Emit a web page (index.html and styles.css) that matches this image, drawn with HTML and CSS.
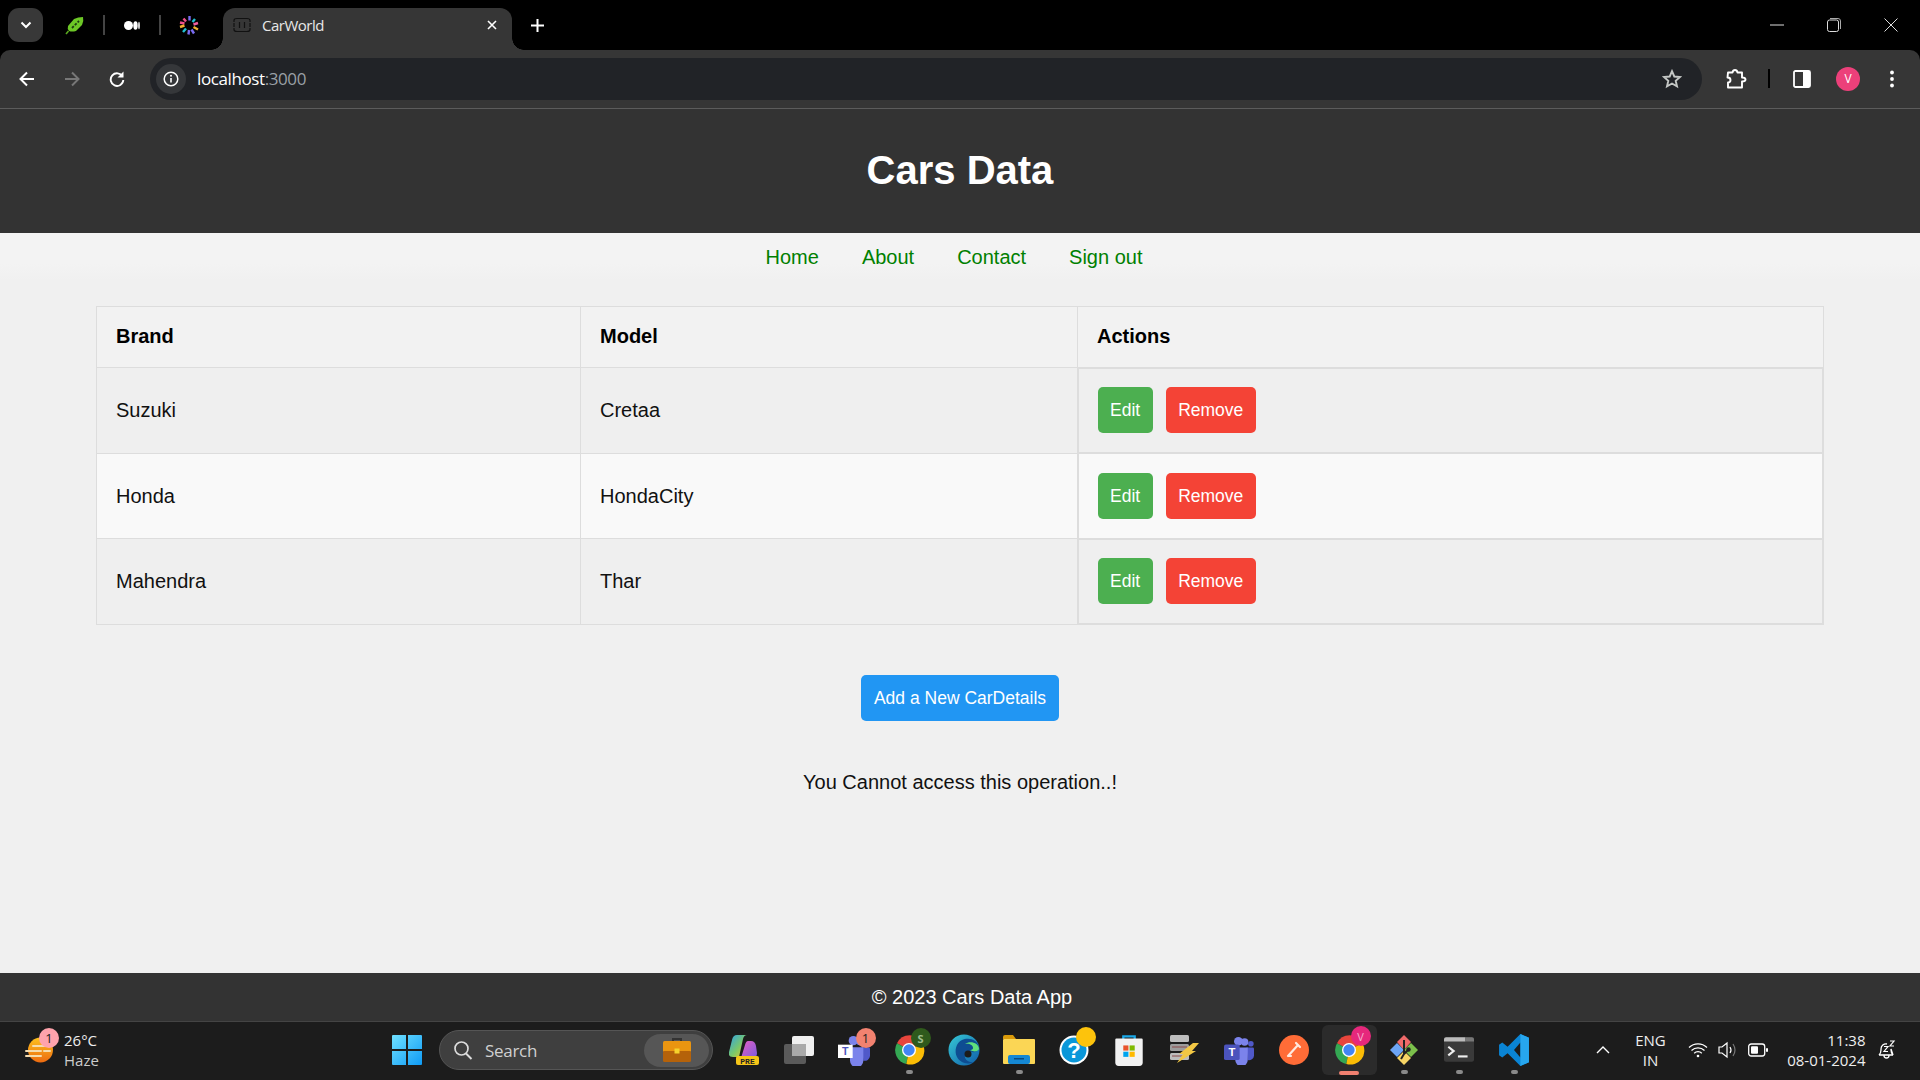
FILE: index.html
```html
<!DOCTYPE html>
<html lang="en">
<head>
<meta charset="utf-8">
<title>CarWorld</title>
<link rel="stylesheet" href="styles.css">
</head>
<body>
<svg class="defs" width="0" height="0" aria-hidden="true">
  <symbol id="chrome" viewBox="0 0 48 48">
    <path d="M24 24 L6 14 A21 21 0 0 1 44 14 Z" fill="#e8453c"/>
    <path d="M24 24 L6 14 A21 21 0 0 0 20 45 Z" fill="#34a853"/>
    <path d="M24 24 L44 14 A21 21 0 0 1 20 45 Z" fill="#fbbc05"/>
    <circle cx="24" cy="24" r="10.500" fill="#fff"/>
    <circle cx="24" cy="24" r="8.500" fill="#4285f4"/>
  </symbol>
  <symbol id="teams" viewBox="0 0 48 48">
    <circle cx="33" cy="11" r="6" fill="#7b83eb"/>
    <circle cx="43" cy="14" r="4.500" fill="#5059c9"/>
    <path d="M36 20h10a2 2 0 0 1 2 2v11a8 8 0 0 1-10 7z" fill="#5059c9"/>
    <path d="M18 20h20v20a10 10 0 0 1-20 0z" fill="#7b83eb"/>
    <circle cx="23" cy="10" r="7" fill="#7b83eb"/>
  </symbol>
</svg>

<div class="tabstrip">
  <button class="tabsearch"><svg width="12" height="8" viewBox="0 0 12 8"><path d="M1.500 1.500 6 6l4.500-4.500" fill="none" stroke="#fff" stroke-width="2"/></svg></button>
  <div class="pin leaf"><svg width="20" height="20" viewBox="0 0 20 20"><path d="M3 11 9 4q4-2 9-2 1 4-1 8l-6 6q-4 1-7 0-2-2-1-5z" fill="#6cc726"/><path d="M1 19 3.500 16" stroke="#5aa820" stroke-width="1.600"/><path d="M7 13l7-7" stroke="#1c3a10" stroke-width="1.800" stroke-dasharray="2.500 1.500"/></svg></div>
  <span class="pinsep"></span>
  <div class="pin medium"><svg width="16" height="9" viewBox="0 0 16 9"><ellipse cx="4.500" cy="4.500" rx="4.500" ry="4.500" fill="#fff"/><ellipse cx="11.500" cy="4.500" rx="2.200" ry="4.200" fill="#fff"/><ellipse cx="15" cy="4.500" rx="1" ry="3.800" fill="#ccc"/></svg></div>
  <span class="pinsep"></span>
  <div class="pin spark"><svg width="20" height="20" viewBox="0 0 20 20" stroke-width="2.400"><path d="M10.500 1v4.500" stroke="#7a6cf0"/><path d="M4.500 3.500 7 6.500" stroke="#f0508a"/><path d="M16 4 13.500 7" stroke="#20c0d0"/><path d="M1 7.500 5.500 8.500" stroke="#f0508a"/><path d="M19 8 14.500 9.500" stroke="#f05fa0"/><path d="M1 12l4.500-1.500" stroke="#f0b030"/><path d="M19 14.500 14.500 12" stroke="#f0b030"/><path d="M4 17 7 13.500" stroke="#20c0d0"/><path d="M9.500 19.500 10 15" stroke="#7a6cf0"/><path d="M15 18.500 12.500 14.500" stroke="#7a6cf0"/></svg></div>
  <div class="tab">
    <svg class="favicon" width="18" height="16" viewBox="0 0 18 16"><path d="M1 5V3.500Q1 1.500 4 1.500h10q3 0 3 2V5M1 11v1.500q0 2 3 2h10q3 0 3-2V11M1 6v4M17 6v4M6.500 5v6M11.500 5v6" fill="none" stroke="#111" stroke-width="1.200"/></svg>
    <span class="tabtitle">CarWorld</span>
    <svg class="tabclose" width="10" height="10" viewBox="0 0 10 10"><path d="M1 1l8 8M9 1 1 9" stroke="#fff" stroke-width="1.600"/></svg>
  </div>
  <svg class="newtab" width="13" height="13" viewBox="0 0 13 13"><path d="M6.500 0v13M0 6.500h13" stroke="#fff" stroke-width="2"/></svg>
  <div class="winctl">
    <svg width="14" height="2" viewBox="0 0 14 2"><path d="M0 1h14" stroke="#ddd"/></svg>
    <svg width="14" height="14" viewBox="0 0 14 14"><rect x=".5" y="2" width="11" height="11.500" rx="2" fill="none" stroke="#ddd"/><path d="M3 .5h8q2.500 0 2.500 2.500v8" fill="none" stroke="#aaa"/></svg>
    <svg width="14" height="14" viewBox="0 0 14 14"><path d="M.5.5l13 13M13.500.5l-13 13" stroke="#ddd"/></svg>
  </div>
</div>

<div class="toolbarwrap">
<div class="toolbar">
  <svg class="navicon" width="16" height="16" viewBox="0 0 16 16"><path d="M15 8H2M8 1.500 1.500 8 8 14.500" fill="none" stroke="#fff" stroke-width="2"/></svg>
  <svg class="navicon" width="16" height="16" viewBox="0 0 16 16"><path d="M1 8h13M8 1.500 14.500 8 8 14.500" fill="none" stroke="#777" stroke-width="2"/></svg>
  <svg class="navicon" width="16" height="16" viewBox="0 0 16 16"><path d="M13.500 5.500A6.300 6.300 0 1 0 14.300 9" fill="none" stroke="#fff" stroke-width="1.900"/><path d="M14.500 .5v6h-6z" fill="#fff"/></svg>
  <div class="omnibox">
    <span class="siteinfo"><svg width="16" height="16" viewBox="0 0 16 16"><circle cx="8" cy="8" r="6.800" fill="none" stroke="#fff" stroke-width="1.500"/><path d="M8 7v4.500" stroke="#fff" stroke-width="1.600"/><circle cx="8" cy="4.800" r="1" fill="#fff"/></svg></span>
    <span class="url">localhost<span class="urlport">:3000</span></span>
    <svg class="star" width="20" height="20" viewBox="0 0 20 20"><path d="M10 2.200 12.300 7.500l5.700.5-4.300 3.800 1.300 5.600L10 14.500l-5 2.900 1.300-5.600L2 8l5.700-.5z" fill="none" stroke="#c4c7c5" stroke-width="1.900"/></svg>
  </div>
  <svg class="tbicon ext" width="21" height="20" viewBox="0 0 21 20"><path d="M2 3.500h4.500Q7 1 9 1t2.500 2.500H16v5q3.500 0 3.500 2T16 12.500v6H2v-5q2.500 0 2.500-2.500T1.500 8.500z" fill="none" stroke="#fff" stroke-width="1.900" stroke-linejoin="round"/></svg>
  <span class="tbsep"></span>
  <svg class="tbicon panel" width="18" height="18" viewBox="0 0 18 18"><rect x="1" y="1" width="16" height="16" rx="1.500" fill="none" stroke="#fff" stroke-width="1.800"/><rect x="10" y="1" width="7" height="16" fill="#fff"/></svg>
  <span class="avatar">V</span>
  <svg class="tbicon dots" width="6" height="18" viewBox="0 0 6 18"><circle cx="3" cy="2.500" r="1.900" fill="#fff"/><circle cx="3" cy="9" r="1.900" fill="#fff"/><circle cx="3" cy="15.500" r="1.900" fill="#fff"/></svg>
</div>
</div>

<div class="page">
  <header class="hero"><h1>Cars Data</h1></header>
  <nav class="links">
    <a href="#">Home</a>
    <a href="#">About</a>
    <a href="#">Contact</a>
    <a href="#">Sign out</a>
  </nav>
  <main class="content">
    <table class="cars">
      <colgroup><col class="c1"><col class="c2"><col></colgroup>
      <thead>
        <tr><th>Brand</th><th>Model</th><th>Actions</th></tr>
      </thead>
      <tbody>
        <tr><td>Suzuki</td><td>Cretaa</td><td class="act"><button class="btn edit">Edit</button><button class="btn remove">Remove</button></td></tr>
        <tr><td>Honda</td><td>HondaCity</td><td class="act"><button class="btn edit">Edit</button><button class="btn remove">Remove</button></td></tr>
        <tr><td>Mahendra</td><td>Thar</td><td class="act"><button class="btn edit">Edit</button><button class="btn remove">Remove</button></td></tr>
      </tbody>
    </table>
    <button class="btn add">Add a New CarDetails</button>
    <p class="msg">You Cannot access this operation..!</p>
  </main>
  <footer class="foot">© 2023 Cars Data App</footer>
</div>

<div class="taskbar">
  <div class="weather">
    <span class="wicon"><svg width="28" height="26" viewBox="0 0 28 26"><defs><linearGradient id="sun" x1="0" y1="0" x2="0" y2="1"><stop offset="0" stop-color="#fdc21e"/><stop offset="1" stop-color="#ec6a10"/></linearGradient></defs><circle cx="15.500" cy="13" r="12.500" fill="url(#sun)"/><path d="M8 9h16M1 14h15M19 14h6M1 19h15" stroke="#f5dcae" stroke-width="2" stroke-linecap="round"/></svg><span class="wbadge">1</span></span>
    <span class="wtext"><span>26°C</span><span class="haze">Haze</span></span>
  </div>
  <span class="startbtn"><svg width="30" height="30" viewBox="0 0 30 30"><defs><linearGradient id="win" x1="0" y1="0" x2="1" y2="1"><stop offset="0" stop-color="#6fe0ff"/><stop offset="1" stop-color="#0f9bf5"/></linearGradient></defs><path d="M0 1q0-1 1-1h13v14H0zM16 0h13q1 0 1 1v13H16zM0 16h14v14H1q-1 0-1-1zM16 16h14v13q0 1-1 1H16z" fill="url(#win)"/></svg></span>
  <div class="search">
    <svg width="20" height="20" viewBox="0 0 20 20"><circle cx="8.500" cy="8.500" r="6.500" fill="none" stroke="#ddd" stroke-width="1.700"/><path d="M13 13.500 18.500 19" stroke="#ddd" stroke-width="1.900"/></svg>
    <span class="searchtext">Search</span>
    <span class="bag"><svg width="28" height="24" viewBox="0 0 28 24"><path d="M10 4V1h8v3" fill="none" stroke="#333" stroke-width="2"/><rect y="3" width="28" height="11" rx="1.500" fill="#ea9510"/><rect y="13" width="28" height="11" rx="1.500" fill="#b5620a"/><rect x="11.500" y="10.500" width="5" height="5" fill="#f6d32d"/></svg></span>
  </div>
  <div class="apps">
    <span class="app"><svg width="30" height="30" viewBox="0 0 30 30"><defs><linearGradient id="cp" x1="0" y1="0" x2="1" y2="1"><stop offset="0" stop-color="#2fa4e7"/><stop offset=".55" stop-color="#7ac86a"/><stop offset="1" stop-color="#f5c323"/></linearGradient><linearGradient id="cp2" x1="0" y1="0" x2="1" y2="1"><stop offset="0" stop-color="#e85fc0"/><stop offset="1" stop-color="#7a5ae0"/></linearGradient></defs><path d="M8 0h10q-3 0-4 4L10 22H4Q-1 22 0 17L3 5q1-5 5-5z" fill="url(#cp)"/><path d="M19 6h3q4 0 5 5l1 7q0 5-4 5h-12l4-13q1-4 3-4z" fill="url(#cp2)"/><rect x="7" y="21" width="23" height="9" rx="2" fill="#f5c518"/><text x="18.500" y="28.500" class="pretext">PRE</text></svg></span>
    <span class="app"><svg width="30" height="28" viewBox="0 0 30 28"><rect y="8" width="22" height="20" rx="2" fill="#5a5a5a"/><rect x="8" y="0" width="22" height="20" rx="2" fill="#f0f0f0"/><rect x="8" y="8" width="14" height="12" fill="#aaa"/></svg></span>
    <span class="app"><svg width="32" height="32" viewBox="0 0 48 48"><use href="#teams"/><rect x="0" y="16" width="22" height="20" fill="#fff"/><text x="11" y="32" class="tletter">T</text></svg><span class="badge red">1</span></span>
    <span class="app"><svg width="32" height="32" viewBox="0 0 48 48"><use href="#chrome"/></svg><span class="badge green">S</span><i class="dot"></i></span>
    <span class="app"><svg width="32" height="32" viewBox="0 0 32 32"><defs><linearGradient id="ed" x1="0" y1="0" x2="1" y2="1"><stop offset="0" stop-color="#36c9d6"/><stop offset="1" stop-color="#0f5ca8"/></linearGradient></defs><circle cx="16" cy="16" r="15.500" fill="url(#ed)"/><path d="M31 14C30 5 20 3 14 6 8 9 6 17 9 23c3 6 11 8 17 5-6 1-10-3-9-7 1-3 5-4 7-3 3 1 6-1 7-4z" fill="#0e4d92"/><path d="M31 15c0-6-9-9-14-5 4-1 8 1 8 4 0 2-3 2-3 2 3 2 8 2 9-1z" fill="#5fe07c"/><circle cx="20" cy="20" r="3.500" fill="#1c1c1c"/></svg></span>
    <span class="app"><svg width="32" height="30" viewBox="0 0 32 30"><path d="M0 2q0-2 2-2h8l3 4h-13z" fill="#d99a0a"/><rect y="4" width="32" height="25" rx="1" fill="#fbd655"/><rect x="5" y="20" width="22" height="9" rx="2" fill="#1588d4"/><rect x="11" y="23" width="10" height="1.500" fill="#0a4a80"/></svg><i class="dot"></i></span>
    <span class="app"><svg width="30" height="36" viewBox="0 0 30 36"><circle cx="15" cy="18" r="14.500" fill="#fff"/><circle cx="15" cy="18" r="12.500" fill="#0a97d9"/><text x="15" y="26" class="qmark">?</text></svg><span class="badge yellow"></span></span>
    <span class="app"><svg width="28" height="32" viewBox="0 0 24 28"><path d="M7 5V2h10v3" fill="none" stroke="#1aa8e8" stroke-width="2"/><path d="M1 4h22q1 0 1 1v20q0 3-3 3H3q-3 0-3-3V5q0-1 1-1z" fill="#f2f2f2"/><rect x="7" y="10" width="4.500" height="4.500" fill="#e8532b"/><rect x="12.500" y="10" width="4.500" height="4.500" fill="#7fba00"/><rect x="7" y="15.500" width="4.500" height="4.500" fill="#00a4ef"/><rect x="12.500" y="15.500" width="4.500" height="4.500" fill="#ffb900"/></svg></span>
    <span class="app"><svg width="30" height="30" viewBox="0 0 30 30"><rect x="1" y="0" width="19" height="7" rx="1.500" fill="#bdbdbd"/><rect x="1" y="9" width="19" height="7" rx="1.500" fill="#9c9c9c"/><rect x="1" y="18" width="19" height="7" rx="1.500" fill="#bdbdbd"/><path d="M3 12h15M3 21h15" stroke="#8a4a4a"/><path d="M24 8h6l-7 8h4L8 28l6-9H10z" fill="#f2c744"/></svg></span>
    <span class="app"><svg width="30" height="30" viewBox="0 0 48 48"><use href="#teams"/><rect x="0" y="15" width="25" height="25" rx="3" fill="#4b53bc"/><text x="12.500" y="34" class="tletter2">T</text></svg></span>
    <span class="app"><svg width="30" height="30" viewBox="0 0 30 30"><circle cx="15" cy="15" r="15" fill="#ff6c37"/><path d="M9 21 19 10M17 8l4 4M9 21l3 0" stroke="#ffe9df" stroke-width="2.200" stroke-linecap="round"/></svg></span>
    <span class="app active"><svg width="32" height="32" viewBox="0 0 48 48"><use href="#chrome"/></svg><span class="badge pink">V</span><i class="bar"></i></span>
    <span class="app"><svg width="30" height="30" viewBox="0 0 30 30"><path d="M8 8l7 7-7 7-7-7z" fill="#6da5f5"/><path d="M15 0l7 7-7 8-7-8z" fill="#f06a6a"/><path d="M22 8l7 7-7 7-7-7z" fill="#7cc04b"/><path d="M15 16l7 7-7 7-7-7z" fill="#f7d565"/><path d="M15 5v14M15 19l-3 5M15 19l4-4" stroke="#222" stroke-width="2"/><circle cx="19.500" cy="14.500" r="2.200" fill="#222"/></svg><i class="dot"></i></span>
    <span class="app"><svg width="30" height="26" viewBox="0 0 28 24"><rect width="28" height="23" rx="2" fill="#3a3a3a"/><path d="M2 0h18v4H0V2q0-2 2-2z" fill="#bbb"/><path d="M20 0h6q2 0 2 2v2h-8z" fill="#777"/><path d="M4 9l5 4-5 4" fill="none" stroke="#eee" stroke-width="2"/><path d="M13 18h9" stroke="#eee" stroke-width="2"/></svg><i class="dot"></i></span>
    <span class="app"><svg width="30" height="32" viewBox="0 0 28 30"><path d="M20 0 28 3.500v23L20 30 8 18l-5 4-3-2v-10l3-2 5 4zM20 8l-6 7 6 7z" fill="#0a84d4"/><path d="M20 0 28 3.500v23L20 30z" fill="#27a6ee"/></svg><i class="dot"></i></span>
  </div>
  <div class="tray">
    <svg class="tchev" width="14" height="8" viewBox="0 0 14 8"><path d="M1 7l6-6 6 6" fill="none" stroke="#fff" stroke-width="1.400"/></svg>
    <span class="lang"><span>ENG</span><span>IN</span></span>
    <svg class="wifi" width="20" height="16" viewBox="0 0 20 16"><path d="M1 5.500a13 13 0 0 1 18 0M3.500 8.500a9.500 9.500 0 0 1 13 0M6.200 11.200a5.500 5.500 0 0 1 7.600 0" fill="none" stroke="#fff" stroke-width="1.300"/><circle cx="10" cy="14" r="1.300" fill="#fff"/></svg>
    <svg class="vol" width="20" height="18" viewBox="0 0 20 18"><path d="M1 6h3l5-4v14l-5-4H1z" fill="none" stroke="#fff" stroke-width="1.200"/><path d="M12 6q2 3 0 6" fill="none" stroke="#fff" stroke-width="1.200"/><path d="M15 3q4 6 0 12" fill="none" stroke="#777" stroke-width="1.200"/></svg>
    <svg class="batt" width="20" height="14" viewBox="0 0 20 14"><rect x=".7" y="1" width="16" height="12" rx="2.500" fill="none" stroke="#fff" stroke-width="1.300"/><rect x="3" y="3.300" width="7" height="7.400" rx="1" fill="#fff"/><rect x="18" y="5" width="2" height="4" rx="1" fill="#fff"/></svg>
    <span class="clock"><span>11:38</span><span>08-01-2024</span></span>
    <svg class="bell" width="18" height="20" viewBox="0 0 18 20"><path d="M1 15q2-2 2-5V9a5 5 0 0 1 6-5v0M13 9v1q0 3 2 5zM1 15h14M6 15.500a2.500 2.500 0 0 0 5 0" fill="none" stroke="#fff" stroke-width="1.300"/><path d="M6 6.500h4l-4 5h4M12 1h4l-4 5h4" fill="none" stroke="#fff" stroke-width="1.200"/></svg>
  </div>
</div>
</body>
</html>
```
FILE: styles.css
```css
* { box-sizing: border-box; }
html, body { margin: 0; padding: 0; }
body {
  width: 1920px;
  height: 1080px;
  overflow: hidden;
  display: flex;
  flex-direction: column;
  font-family: "Liberation Sans", Arial, sans-serif;
  background: #f0f0f0;
}
.defs { position: absolute; }

/* tab strip */
.tabstrip {
  height: 50px;
  flex: none;
  background: #000;
  display: flex;
  align-items: center;
  position: relative;
}
.tabsearch {
  width: 35px;
  height: 34px;
  margin: 0 0 0 8px;
  border: 0;
  padding: 0;
  border-radius: 11px;
  background: #383838;
  display: flex;
  align-items: center;
  justify-content: center;
}
.pin { display: flex; align-items: center; justify-content: center; height: 20px; }
.leaf { width: 20px; margin-left: 22px; }
.medium { width: 16px; }
.spark { width: 20px; }
.pinsep { width: 2px; height: 20px; background: #444; }
.leaf + .pinsep { margin: 0 19px 0 18px; }
.medium + .pinsep { margin: 0 18px 0 19px; }
.tab {
  width: 289px;
  height: 42px;
  margin: 8px 0 0 24px;
  border-radius: 12px 12px 0 0;
  background: #363636;
  display: flex;
  align-items: center;
  padding: 0 15px 8px 10px;
  position: relative;
}
.tab::before, .tab::after {
  content: "";
  position: absolute;
  bottom: 0;
  width: 12px;
  height: 12px;
}
.tab::before { left: -12px; background: radial-gradient(circle at 0 0, transparent 11.500px, #363636 12px); }
.tab::after { right: -12px; background: radial-gradient(circle at 100% 0, transparent 11.500px, #363636 12px); }
.favicon { flex: none; }
.tabtitle {
  margin-left: 11px;
  font: 15px "Open Sans", "Noto Sans", sans-serif;
  letter-spacing: -.5px;
  color: #e8e8e8;
  flex: 1;
}
.tabclose { flex: none; }
.newtab { margin: 0 0 0 19px; }
.winctl {
  margin-left: auto;
  width: 128px;
  margin-right: 22px;
  display: flex;
  align-items: center;
  justify-content: space-between;
}

/* toolbar */
.toolbarwrap { background: #000; flex: none; }
.toolbar {
  height: 59px;
  background: #363636;
  border-radius: 10px 10px 0 0;
  border-bottom: 1px solid #5c5c5c;
  display: flex;
  align-items: center;
  padding: 0 0 1px 19px;
}
.navicon { margin-right: 29px; flex: none; }
.omnibox {
  width: 1552px;
  height: 42px;
  margin-left: -4px;
  border-radius: 21px;
  background: #212327;
  display: flex;
  align-items: center;
  padding: 0 20px 0 6px;
  flex: none;
}
.siteinfo {
  width: 30px;
  height: 30px;
  border-radius: 50%;
  background: #35373a;
  display: flex;
  align-items: center;
  justify-content: center;
}
.url {
  margin-left: 11px;
  font: 17px "Open Sans", "Noto Sans", sans-serif;
  letter-spacing: -.4px;
  color: #fff;
}
.urlport { color: #9aa0a6; }
.star { margin-left: auto; }
.ext { margin-left: 23.500px; }
.tbsep { width: 2px; height: 19px; background: #000; margin-left: 21.500px; }
.panel { margin-left: 23px; }
.avatar {
  width: 24px;
  height: 24px;
  margin-left: 25px;
  border-radius: 50%;
  background: #ec407a;
  color: #fff;
  font: 12px "Open Sans", sans-serif;
  display: flex;
  align-items: center;
  justify-content: center;
}
.dots { margin-left: 29px; }

/* app page */
.page {
  flex: 1;
  min-height: 0;
  display: flex;
  flex-direction: column;
  background: #f0f0f0;
}
.hero {
  height: 124px;
  flex: none;
  background: #333;
  display: flex;
  align-items: center;
  justify-content: center;
  padding-bottom: 2px;
}
.hero h1 { margin: 0; font-size: 40px; font-weight: 700; color: #fff; }
.links {
  height: 47px;
  flex: none;
  background: linear-gradient(#f3f3f3 65%, #f0f0f0);
  display: flex;
  align-items: center;
  justify-content: center;
  gap: 43px;
  font-size: 20px;
  padding: 2px 12px 0 0;
}
.links a { color: #008000; text-decoration: none; }
.content {
  flex: 1;
  display: flex;
  flex-direction: column;
  align-items: center;
  padding-top: 26px;
}
.cars {
  width: 1728px;
  table-layout: fixed;
  border-collapse: collapse;
  font-size: 20px;
  color: #111;
}
.c1 { width: 484px; }
.c2 { width: 497px; }
.cars th, .cars td {
  border: 1px solid #ddd;
  padding: 0 19px;
  text-align: left;
}
.cars th { height: 61px; background: #f2f2f2; font-weight: 700; color: #000; padding-bottom: 1px; }
.cars td { height: 85.500px; }
.cars tbody tr:nth-child(odd) { background: #efefef; }
.cars tbody tr:nth-child(even) { background: #f9f9f9; }
.cars tbody tr:nth-child(2) td { padding-top: 1px; }
.cars td.act { border-width: 2px; }
.btn {
  border: 0;
  border-radius: 5px;
  color: #fff;
  font: 17.500px "Liberation Sans", Arial, sans-serif;
  height: 46px;
  padding: 0 12.500px;
}
.edit { background: #4caf50; margin-right: 13px; }
.remove { background: #f44336; }
.add { background: #2196f3; margin-top: 50px; width: 198px; padding: 0; }
.msg { margin: 49px 0 0; font-size: 20px; line-height: 24px; color: #111; }
.foot {
  height: 48px;
  flex: none;
  background: #333;
  color: #fff;
  font-size: 20px;
  display: flex;
  align-items: center;
  justify-content: center;
  padding: 1px 0 0 24px;
}

/* windows taskbar */
.taskbar {
  height: 59px;
  flex: none;
  background: #1c1c1c;
  border-top: 1px solid #444;
  display: flex;
  align-items: center;
  font-family: "Open Sans", "Noto Sans", sans-serif;
  color: #eee;
  position: relative;
  padding-bottom: 2px;
}
.weather { width: 379px; display: flex; align-items: center; padding-left: 25px; }
.wicon { position: relative; display: flex; margin-top: -1px; }
.wbadge {
  position: absolute;
  left: 14px;
  top: -9px;
  width: 20px;
  height: 20px;
  border-radius: 50%;
  background: #ffa3ac;
  color: #222;
  font-size: 13px;
  display: flex;
  align-items: center;
  justify-content: center;
}
.wtext { margin-left: 11px; display: flex; flex-direction: column; font-size: 15px; line-height: 20px; }
.haze { color: #ccc; }
.startbtn { width: 56px; display: flex; justify-content: center; }
.search {
  width: 274px;
  height: 40px;
  margin-left: 4px;
  border-radius: 20px;
  background: #3f3f3f;
  border: 1px solid #555;
  display: flex;
  align-items: center;
  padding: 0 3px 0 13px;
  flex: none;
}
.searchtext { margin-left: 12px; font-size: 17px; color: #d0d0d0; letter-spacing: -.3px; }
.bag {
  margin-left: auto;
  width: 65px;
  height: 33px;
  border-radius: 17px;
  background: #565656;
  display: flex;
  align-items: center;
  justify-content: center;
}
.apps { display: flex; margin-left: 3.500px; flex: none; }
.app {
  width: 55px;
  height: 50px;
  position: relative;
  display: flex;
  align-items: center;
  justify-content: center;
}
.active { background: #2b2b2b; border-radius: 6px; }
.dot {
  position: absolute;
  bottom: 1px;
  left: 24px;
  width: 7px;
  height: 4px;
  border-radius: 2px;
  background: #8a8a8a;
}
.bar {
  position: absolute;
  bottom: 0;
  left: 17px;
  width: 20px;
  height: 4px;
  border-radius: 2px;
  background: #f08070;
}
.badge {
  position: absolute;
  left: 29px;
  top: 3px;
  width: 20px;
  height: 20px;
  border-radius: 50%;
  display: flex;
  align-items: center;
  justify-content: center;
  font-size: 13px;
  color: #222;
}
.red { background: #f28270; }
.green { background: #2f5a1c; color: #a0c090; font-size: 11px; font-weight: 700; }
.yellow { background: #fdc30c; left: 29px; top: 2px; }
.pink { background: #e6287c; color: #f6b0cc; font-size: 11px; left: 29px; top: 1px; }
.pretext { font: 700 8px "Liberation Mono", monospace; fill: #222; text-anchor: middle; }
.tletter { font: 700 16px "Liberation Sans", sans-serif; fill: #4b53bc; text-anchor: middle; }
.tletter2 { font: 700 18px "Liberation Sans", sans-serif; fill: #fff; text-anchor: middle; }
.qmark { font: 700 22px "Liberation Sans", sans-serif; fill: #fff; text-anchor: middle; }
.tray { flex: 1; display: flex; align-items: center; padding-left: 54px; }
.tchev { flex: none; }
.lang { width: 60px; margin-left: 11px; display: flex; flex-direction: column; align-items: center; font-size: 15px; line-height: 20px; }
.wifi { margin-left: 7px; }
.vol { margin-left: 10px; }
.batt { margin-left: 10px; }
.clock { width: 89px; margin-left: 9px; display: flex; flex-direction: column; align-items: flex-end; font-size: 15px; line-height: 20px; }
.bell { margin-left: 12px; flex: none; }
```
